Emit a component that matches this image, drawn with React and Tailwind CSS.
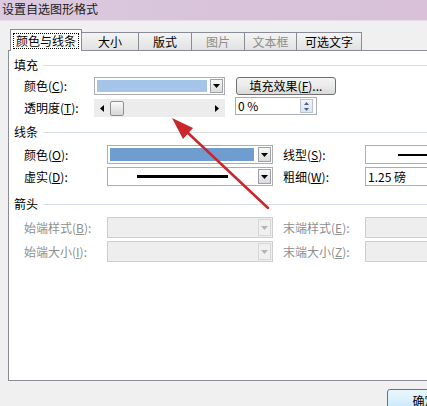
import React from 'react'

const Tri = ({ color = '#000', dir = 'down' }) => {
  const d = {
    down: 'M0 0H7L3.5 4Z',
    up: 'M0 4H7L3.5 0Z',
    left: 'M4 0V7L0 3.5Z',
    right: 'M0 0V7L4 3.5Z',
  }[dir]
  const vb = dir === 'down' || dir === 'up' ? '0 0 7 4' : '0 0 4 7'
  const w = dir === 'down' || dir === 'up' ? 7 : 4
  const h = dir === 'down' || dir === 'up' ? 4 : 7
  return (
    <svg width={w} height={h} viewBox={vb}>
      <path d={d} fill={color} />
    </svg>
  )
}

function DropBtn({ disabled }) {
  return (
    <div
      className={`m-[1px] w-[13px] flex items-center justify-center border ${
        disabled
          ? 'border-[#d6d6d6] bg-[#f0f0f0]'
          : 'border-[#9da1a8] bg-gradient-to-b from-[#f7f7f7] to-[#dcdcdc]'
      }`}
    >
      <Tri color={disabled ? '#b4b4b4' : '#000'} />
    </div>
  )
}

function Combo({ className = '', disabled, children }) {
  return (
    <div
      className={`flex shrink-0 border ${
        disabled ? 'border-[#cdcdcd] bg-[#eeeeee]' : 'border-[#abadb3] bg-white'
      } ${className}`}
    >
      <div className="flex-1 flex">{children}</div>
      <DropBtn disabled={disabled} />
    </div>
  )
}

function Group({ title }) {
  return (
    <div className="flex items-center h-[14px]">
      <span className="leading-[14px]">{title}</span>
      <div className="ml-[5px] h-px flex-1 bg-[#d5dfe5]" />
    </div>
  )
}

function Label({ className = '', disabled, children }) {
  return (
    <div
      className={`shrink-0 flex items-center whitespace-nowrap ${
        disabled ? 'text-[#8e8e8e]' : 'text-black'
      } ${className}`}
    >
      {children}
    </div>
  )
}

const U = ({ children }) => <span className="underline underline-offset-1">{children}</span>

function Tab({ children, selected, disabled, className = '' }) {
  if (selected) {
    return (
      <div
        className={`relative z-10 -mb-px h-[22px] flex items-center justify-center border border-b-0 border-[#898c95] bg-white ${className}`}
      >
        <span className="outline outline-1 outline-dotted outline-black px-[2px] leading-[14px]">
          {children}
        </span>
      </div>
    )
  }
  return (
    <div
      className={`-ml-px h-[18px] flex items-center justify-center border border-b-0 border-[#898c95] bg-gradient-to-b from-[#f4f4f4] to-[#e2e2e2] ${
        disabled ? 'text-[#8d8d8d]' : 'text-black'
      } ${className}`}
    >
      {children}
    </div>
  )
}

export default function App() {
  return (
    <div className="relative w-[427px] h-[406px] overflow-hidden bg-[#f0f0f0] text-[12px] text-black font-['SimSun','Noto_Sans_CJK_SC',sans-serif]">
      <div className="h-[21px] bg-gradient-to-r from-[#dccbe0] via-[#d8c3da] to-[#d9c2d9] border-b border-[#e8dce9] pl-[2px] text-[12px] leading-[18px] text-[#1a1a1a]">
        设置自选图形格式
      </div>

      <div className="flex h-[385px]">
        <div className="w-[3px] bg-[#4e4e50]" />
        <div className="flex-1 pl-[8px] pt-[8px] flex flex-col">
          {/* tabs */}
          <div className="flex items-end h-[21px] pl-[2px]">
            <Tab selected className="w-[72px]">颜色与线条</Tab>
            <Tab className="w-[58px]">大小</Tab>
            <Tab className="w-[54px]">版式</Tab>
            <Tab disabled className="w-[54px] bg-gradient-to-b from-[#e6e6e6] to-[#dadada]">图片</Tab>
            <Tab disabled className="w-[53px] bg-gradient-to-b from-[#e6e6e6] to-[#dadada]">文本框</Tab>
            <Tab className="w-[66px]">可选文字</Tab>
          </div>

          {/* panel */}
          <div className="w-[460px] h-[331px] shrink-0 border border-[#898c95] bg-white pl-[5px] pt-[7px]">
            <Group title="填充" />

            <div className="mt-[5px] h-[18px] flex items-stretch">
              <Label className="w-[80px] pl-[10px]">
                颜色(<U>C</U>):
              </Label>
              <Combo className="w-[131px]">
                <div className="flex-1 ml-[2px] mr-[2px] my-[2px] bg-[#a4c4ea]" />
              </Combo>
              <div className="ml-[11px] w-[100px] h-[18px] rounded-[3px] border border-[#707070] bg-gradient-to-b from-[#f3f3f3] via-[#ebebeb] to-[#d9d9d9] flex items-center justify-center leading-none">
                填充效果(<U>F</U>)...
              </div>
            </div>

            <div className="mt-[4px] h-[18px] flex items-stretch">
              <Label className="w-[80px] pl-[10px]">
                透明度(<U>T</U>):
              </Label>
              <div className="w-[131px] bg-[#ececec] flex items-center">
                <div className="w-[16px] flex items-center justify-center">
                  <Tri dir="left" />
                </div>
                <div className="w-[14px] h-[15px] rounded-[2px] border border-[#8f8f8f] bg-gradient-to-b from-[#fafafa] to-[#d6d6d6]" />
                <div className="flex-1" />
                <div className="w-[16px] flex items-center justify-center">
                  <Tri dir="right" />
                </div>
              </div>
              <div className="ml-[10px] -mt-[2px] w-[82px] h-[18px] border border-[#abadb3] bg-white flex items-center">
                <span className="flex-1 pl-[2px] leading-none">0 %</span>
                <div className="mr-[3px] w-[13px] h-[14px] flex flex-col border border-[#b8c4d2] bg-gradient-to-b from-[#f2f5f9] to-[#dde4ec]">
                  <div className="flex-1 flex items-center justify-center">
                    <svg width="5" height="3" viewBox="0 0 5 3"><path d="M0 3H5L2.5 0Z" fill="#4d6185" /></svg>
                  </div>
                  <div className="flex-1 flex items-center justify-center">
                    <svg width="5" height="3" viewBox="0 0 5 3"><path d="M0 0H5L2.5 3Z" fill="#4d6185" /></svg>
                  </div>
                </div>
              </div>
            </div>

            <div className="mt-[8px]">
              <Group title="线条" />
            </div>

            <div className="mt-[6px] h-[19px] flex items-stretch">
              <Label className="w-[93px] pl-[10px]">
                颜色(<U>O</U>):
              </Label>
              <Combo className="w-[166px]">
                <div className="flex-1 ml-[2px] mr-[3px] my-[2px] bg-[#6f9dd0]" />
              </Combo>
              <Label className="ml-[10px] w-[82px]">
                线型(<U>S</U>):
              </Label>
              <Combo className="w-[90px]">
                <div className="flex-1 flex items-center pl-[32px]">
                  <div className="h-[2px] w-[60px] bg-black" />
                </div>
              </Combo>
            </div>

            <div className="mt-[3px] h-[19px] flex items-stretch">
              <Label className="w-[93px] pl-[10px]">
                虚实(<U>D</U>):
              </Label>
              <Combo className="w-[166px]">
                <div className="flex-1 flex items-center pl-[29px]">
                  <div className="h-[3px] w-[91px] bg-black" />
                </div>
              </Combo>
              <Label className="ml-[10px] w-[82px]">
                粗细(<U>W</U>):
              </Label>
              <div className="w-[90px] shrink-0 border border-[#abadb3] bg-white flex items-center pl-[2px] leading-none">
                1.25 磅
              </div>
            </div>

            <div className="mt-[11px]">
              <Group title="箭头" />
            </div>

            <div className="mt-[6px] h-[21px] flex items-stretch">
              <Label disabled className="w-[93px] pl-[10px]">
                始端样式(<U>B</U>):
              </Label>
              <Combo disabled className="w-[166px]" />
              <Label disabled className="ml-[10px] w-[82px]">
                末端样式(<U>E</U>):
              </Label>
              <Combo disabled className="w-[90px]" />
            </div>

            <div className="mt-[3px] h-[21px] flex items-stretch">
              <Label disabled className="w-[93px] pl-[10px]">
                始端大小(<U>I</U>):
              </Label>
              <Combo disabled className="w-[166px]" />
              <Label disabled className="ml-[10px] w-[82px]">
                末端大小(<U>Z</U>):
              </Label>
              <Combo disabled className="w-[90px]" />
            </div>
          </div>

          {/* bottom buttons */}
          <div className="mt-[8px] pl-[379px]">
            <div className="w-[75px] h-[23px] rounded-[3px] border border-[#3c7fb1] bg-gradient-to-b from-[#eaf6fd] via-[#d9f0fc] to-[#bee6fd] flex items-center justify-center">
              确定
            </div>
          </div>
        </div>
      </div>

      {/* red annotation arrow */}
      <svg className="absolute inset-0 pointer-events-none" width="427" height="406" viewBox="0 0 427 406">
        <line x1="268" y1="208" x2="187" y2="132" stroke="#c9272b" strokeWidth="2.5" strokeLinecap="round" />
        <polygon points="172,118 193,128 183,139" fill="#c9272b" />
      </svg>
    </div>
  )
}
